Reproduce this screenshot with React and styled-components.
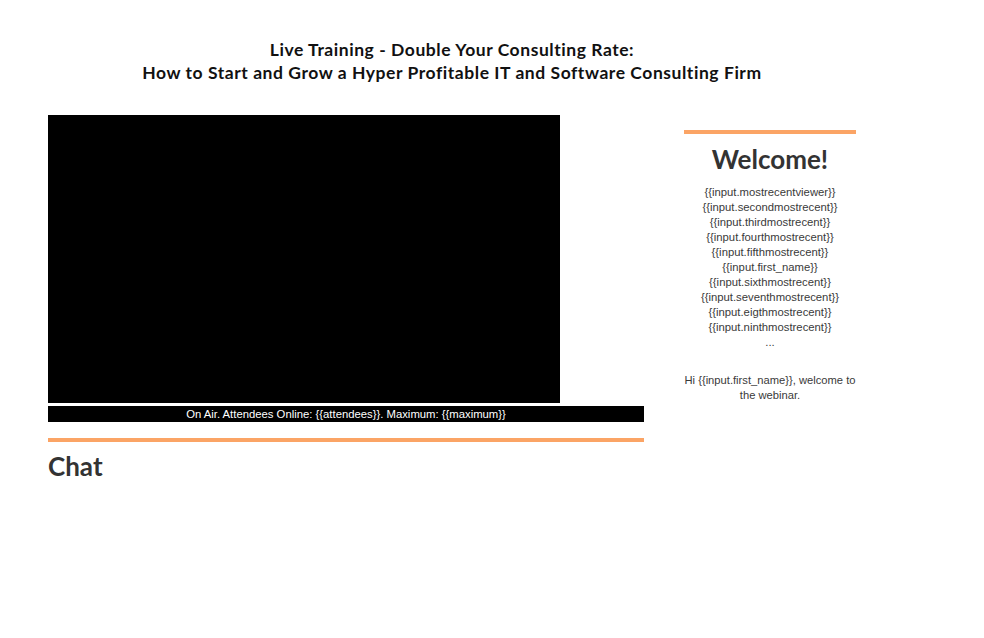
import React from "react";
import styled, { createGlobalStyle } from "styled-components";

const GlobalStyle = createGlobalStyle`
    body {
        margin : 0;
        background : #fff;
        font-family : "Liberation Sans", Arial, sans-serif;
    }
`

const Page = styled.div`
    width : 808px;
    padding : 38px 48px 40px;
`

const Title = styled.h1`
    margin : 0;
    text-align : center;
    font-family : "Lato", "Open Sans", sans-serif;
    font-weight : 700;
    font-size : 17.5px;
    letter-spacing : 0.55px;
    line-height : 23px;
    color : #111;
`

const Columns = styled.div`
    display : flex;
    gap : 40px;
    margin-top : 31px;
    align-items : flex-start;
`

const LeftColumn = styled.div`
    width : 596px;
`

const Video = styled.div`
    width : 512px;
    height : 288px;
    background : #000;
`

const StatusBar = styled.div`
    margin-top : 3px;
    height : 16px;
    background : #000;
    color : #fff;
    font-size : 11.3px;
    line-height : 16px;
    text-align : center;
`

const OrangeRule = styled.div`
    height : 4px;
    background : #fba465;
    margin-top : ${props => props.top || 0}px;
`

const SectionHeading = styled.h2`
    margin : ${props => props.top}px 0 0;
    font-family : "Lato", sans-serif;
    font-weight : 700;
    font-size : ${props => props.size}px;
    line-height : 1.2;
    color : #333;
    text-align : ${props => props.align || "left"};
`

const RightColumn = styled.div`
    width : 172px;
    padding-top : 15px;
    text-align : center;
`

const ViewerList = styled.ul`
    list-style : none;
    margin : 10px 0 0;
    padding : 0;
    font-size : 11.3px;
    line-height : 15px;
    color : #3a3a3a;
`

const Greeting = styled.p`
    margin : 23px -2px 0;
    font-size : 11.2px;
    line-height : 15px;
    color : #3a3a3a;
`

const viewers = [
    "{{input.mostrecentviewer}}",
    "{{input.secondmostrecent}}",
    "{{input.thirdmostrecent}}",
    "{{input.fourthmostrecent}}",
    "{{input.fifthmostrecent}}",
    "{{input.first_name}}",
    "{{input.sixthmostrecent}}",
    "{{input.seventhmostrecent}}",
    "{{input.eigthmostrecent}}",
    "{{input.ninthmostrecent}}",
    "...",
]

function App(){
    return(
        <>
            <GlobalStyle />
            <Page>
                <Title>
                    Live Training - Double Your Consulting Rate:<br />
                    How to Start and Grow a Hyper Profitable IT and Software Consulting Firm
                </Title>
                <Columns>
                    <LeftColumn>
                        <Video />
                        <StatusBar>On Air. Attendees Online: {"{{attendees}}"}. Maximum: {"{{maximum}}"}</StatusBar>
                        <OrangeRule top={16} />
                        <SectionHeading size={26} top={9}>Chat</SectionHeading>
                    </LeftColumn>
                    <RightColumn>
                        <OrangeRule />
                        <SectionHeading size={26} top={10} align="center">Welcome!</SectionHeading>
                        <ViewerList>
                            {viewers.map((v, i) => <li key={i}>{v}</li>)}
                        </ViewerList>
                        <Greeting>Hi {"{{input.first_name}}"}, welcome to the webinar.</Greeting>
                    </RightColumn>
                </Columns>
            </Page>
        </>
    )
}

export default App
